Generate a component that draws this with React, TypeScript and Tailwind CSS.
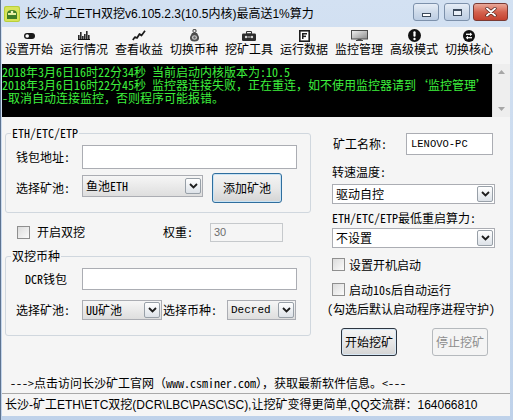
import React from "react";

const CJK = "font-['Noto_Sans_Mono_CJK_SC','Noto_Sans_CJK_SC',monospace]";
const SANS = "font-['Liberation_Sans','Noto_Sans_CJK_SC',sans-serif]";

function Chevron() {
  return (
    <svg width="9" height="6" viewBox="0 0 9 6">
      <path d="M1 1 L4.5 4.5 L8 1" fill="none" stroke="#1d1d1d" strokeWidth="1.8" />
    </svg>
  );
}

function ArrowBox() {
  return (
    <div className="w-[16px] h-[16px] shrink-0 border border-[#98a0a8] rounded-[2px] bg-gradient-to-b from-white to-[#dde2e8] flex items-center justify-center">
      <Chevron />
    </div>
  );
}

function Select({ w, h, text, gray, mono }: { w: string; h: string; text: string; gray?: boolean; mono?: boolean }) {
  return (
    <div
      className={`${w} ${h} shrink-0 border border-[#abadb3] flex items-center justify-between pl-[3px] pr-[1px] ${
        gray ? "bg-gradient-to-b from-[#f6f6f6] to-[#dedede]" : "bg-white"
      }`}
    >
      <span className={`${mono ? "font-['Liberation_Mono',monospace] text-[11px]" : "text-[12px]"} leading-[12px] text-black whitespace-nowrap`}>
        {text}
      </span>
      <ArrowBox />
    </div>
  );
}

function Checkbox() {
  return <div className="w-[13px] h-[13px] shrink-0 border border-[#8f8f8f] bg-gradient-to-br from-[#dcdcdc] to-[#fbfbfb]" />;
}

function Group({ title, className, children }: { title: string; className: string; children: React.ReactNode }) {
  return (
    <div className={`relative border border-[#d0d7de] rounded-[3px] ${className}`}>
      <span className="absolute left-[5px] top-[-7px] px-[1px] bg-[#f5f5f5] text-[12px] leading-[12px] whitespace-nowrap">{title}</span>
      {children}
    </div>
  );
}

const icons: Record<string, React.ReactNode> = {
  toggle: (
    <svg width="11" height="6" viewBox="0 0 11 6">
      <rect x="0" y="0" width="11" height="6" rx="3" fill="#1a1a1a" />
      <circle cx="3.2" cy="3" r="1.8" fill="#fff" />
    </svg>
  ),
  bars: (
    <svg width="12" height="9" viewBox="0 0 12 9">
      <rect x="0" y="4" width="1.6" height="5" fill="#2a2a2a" />
      <rect x="2" y="1" width="1.6" height="8" fill="#2a2a2a" />
      <rect x="4" y="5" width="1.6" height="4" fill="#2a2a2a" />
      <rect x="6" y="3" width="1.6" height="6" fill="#2a2a2a" />
      <rect x="8" y="0" width="1.6" height="9" fill="#2a2a2a" />
      <rect x="10" y="4" width="1.6" height="5" fill="#2a2a2a" />
      <rect x="0" y="8" width="12" height="1" fill="#111" />
    </svg>
  ),
  line: (
    <svg width="14" height="11" viewBox="0 0 14 11">
      <path d="M0.8 10 L3 7 L5 8 L7.5 4 L9.5 5.5 L13 0.8" fill="none" stroke="#1a1a1a" strokeWidth="1.7" strokeLinejoin="round" />
    </svg>
  ),
  bag: (
    <svg width="11" height="13" viewBox="0 0 11 13">
      <circle cx="5.5" cy="2" r="1.6" fill="none" stroke="#555" strokeWidth="1.1" />
      <path d="M3 4 L8 4 L10 8 Q10.5 12.5 5.5 12.5 Q0.5 12.5 1 8 Z" fill="#4d4d4d" />
      <ellipse cx="5.5" cy="8.5" rx="2.6" ry="2.2" fill="#c9c9c9" />
      <circle cx="5.5" cy="8.5" r="1.2" fill="#666" />
    </svg>
  ),
  toolbox: (
    <svg width="14" height="10" viewBox="0 0 14 10">
      <rect x="4.5" y="0.5" width="5" height="2.5" rx="0.8" fill="none" stroke="#333" strokeWidth="1.1" />
      <rect x="0" y="2.5" width="14" height="7.5" rx="1.2" fill="#2b2b2b" />
      <circle cx="4" cy="6" r="1.2" fill="#d8d8d8" />
      <circle cx="10" cy="6" r="1.2" fill="#d8d8d8" />
      <rect x="5.3" y="5.5" width="3.4" height="1" fill="#d8d8d8" />
    </svg>
  ),
  form: (
    <svg width="11" height="12" viewBox="0 0 11 12">
      <rect x="0.8" y="0.8" width="9.4" height="10.4" fill="#fff" stroke="#1f1f1f" strokeWidth="1.6" />
      <rect x="3" y="3" width="5" height="1.5" fill="#1f1f1f" />
      <rect x="3" y="5.6" width="4" height="1.5" fill="#1f1f1f" />
      <rect x="3" y="3" width="1.5" height="6" fill="#1f1f1f" />
    </svg>
  ),
  monitor: (
    <svg width="17" height="11" viewBox="0 0 17 11">
      <defs>
        <linearGradient id="scr" x1="0" y1="0" x2="1" y2="1">
          <stop offset="0" stopColor="#f2f2f2" />
          <stop offset="1" stopColor="#8a8a8a" />
        </linearGradient>
      </defs>
      <rect x="0.5" y="0.5" width="16" height="8.5" fill="url(#scr)" stroke="#4a4a4a" />
      <rect x="6.5" y="9" width="4" height="1" fill="#4a4a4a" />
      <rect x="5" y="10" width="7" height="1" fill="#4a4a4a" />
    </svg>
  ),
  excl: (
    <svg width="13" height="13" viewBox="0 0 13 13">
      <circle cx="6.5" cy="6.5" r="6.5" fill="#111" />
      <rect x="5.4" y="2.2" width="2.2" height="5.6" rx="1" fill="#fff" />
      <circle cx="6.5" cy="10" r="1.2" fill="#fff" />
    </svg>
  ),
  swap: (
    <svg width="12" height="12" viewBox="0 0 12 12">
      <circle cx="6" cy="6" r="6" fill="#111" />
      <path d="M3 4.3 L8 4.3" stroke="#fff" strokeWidth="1.3" />
      <path d="M7 2.4 L9.3 4.3 L7 6.2 Z" fill="#fff" />
      <path d="M4 7.7 L9 7.7" stroke="#fff" strokeWidth="1.3" />
      <path d="M5 5.8 L2.7 7.7 L5 9.6 Z" fill="#fff" />
    </svg>
  ),
};

const tools: [string, string][] = [
  ["toggle", "设置开始"],
  ["bars", "运行情况"],
  ["line", "查看收益"],
  ["bag", "切换币种"],
  ["toolbox", "挖矿工具"],
  ["form", "运行数据"],
  ["monitor", "监控管理"],
  ["excl", "高级模式"],
  ["swap", "切换核心"],
];

function CaptionButton({ kind }: { kind: "min" | "max" | "close" }) {
  if (kind === "close") {
    return (
      <div className="w-[35px] h-[18px] rounded-[3px] border border-[#7a3a33] bg-gradient-to-b from-[#e9a99a] via-[#d4624f] to-[#c4412f] flex items-center justify-center">
        <svg width="12" height="10" viewBox="0 0 12 10">
          <path d="M2 1.5 L10 8.5 M10 1.5 L2 8.5" stroke="#4a1d18" strokeWidth="3.2" strokeLinecap="round" />
          <path d="M2 1.5 L10 8.5 M10 1.5 L2 8.5" stroke="#fff" strokeWidth="1.9" strokeLinecap="round" />
        </svg>
      </div>
    );
  }
  return (
    <div className="w-[26px] h-[18px] rounded-[3px] border border-[#7d91ab] bg-gradient-to-b from-[#e7eef7] via-[#cfdbea] to-[#bccde3] flex items-center justify-center">
      {kind === "min" ? (
        <div className="w-[9px] h-[4px] mt-[6px] border border-[#3c4a5c] bg-white" />
      ) : (
        <div className="w-[9px] h-[7px] border border-[#3c4a5c] border-t-2 bg-[#e8eef6]" />
      )}
    </div>
  );
}

export default function App() {
  return (
    <div className={`w-[513px] h-[420px] flex flex-col bg-gradient-to-b from-[#d3e1f2] to-[#bfd2ea] border-l border-[#5d7390] text-black ${CJK}`}>
      {/* Title bar */}
      <div className="h-[27px] shrink-0 flex items-start">
        <div className="flex items-center h-[27px] pl-[3px]">
          <svg width="16" height="16" viewBox="0 0 16 16">
            <rect x="0" y="0" width="16" height="16" rx="2" fill="#b9cf3a" />
            <rect x="1" y="1" width="14" height="14" rx="1.5" fill="#d8e45a" />
            <path d="M3 13 L3 8 Q3 4 8 4 Q13 4 13 8 L13 13 Z" fill="#3f7d28" />
            <rect x="4" y="7" width="8" height="2" fill="#e8f0a0" />
            <circle cx="8" cy="6" r="1.3" fill="#f5f5c0" />
          </svg>
          <span className={`ml-[5px] text-[12px] leading-[12px] whitespace-nowrap ${SANS}`}>
            长沙-矿工ETH双挖v6.105.2.3(10.5内核)最高送1%算力
          </span>
        </div>
        <div className="ml-auto flex items-start pt-[3px] pr-[5px]">
          <CaptionButton kind="min" />
          <div className="ml-[5px]">
            <CaptionButton kind="max" />
          </div>
          <div className="ml-[3px]">
            <CaptionButton kind="close" />
          </div>
        </div>
      </div>

      {/* Client area */}
      <div className="flex-1 ml-[1px] mr-[3px] mb-[4px] bg-[#f5f5f5] flex flex-col">
        {/* Toolbar */}
        <div className="h-[36px] shrink-0 flex items-start pt-[1px] pl-[3px] gap-[7px]">
          {tools.map(([k, label]) => (
            <div key={label} className="w-[48px] flex flex-col items-center">
              <div className="h-[15px] flex items-center justify-center">{icons[k]}</div>
              <span className="text-[12px] leading-[12px] whitespace-nowrap font-['Noto_Sans_CJK_SC',sans-serif]">{label}</span>
            </div>
          ))}
        </div>

        {/* Console */}
        <div className="mt-[1px] h-[53px] shrink-0 flex">
          <div className="flex-1 bg-black text-[#3df03d] text-[12px] leading-[13px] pt-[1px]">
            <div className="whitespace-nowrap">2018年3月6日16时22分34秒 当前启动内核版本为:10.5</div>
            <div className="whitespace-nowrap">2018年3月6日16时22分45秒 监控器连接失败，正在重连，如不使用监控器请到‘监控管理’</div>
            <div className="whitespace-nowrap">-取消自动连接监控，否则程序可能报错。</div>
          </div>
          <div className="w-[18px] bg-[#eeeeee] border-l border-[#e2e2e2] flex flex-col items-center justify-between py-[6px]">
            <svg width="7" height="4" viewBox="0 0 7 4">
              <path d="M0 4 L3.5 0 L7 4 Z" fill="#a6a6a6" />
            </svg>
            <svg width="7" height="4" viewBox="0 0 7 4">
              <path d="M0 0 L3.5 4 L7 0 Z" fill="#a6a6a6" />
            </svg>
          </div>
        </div>

        {/* Main */}
        <div className="flex pt-[16px]">
          {/* Left column */}
          <div className="ml-[3px] w-[306px] flex flex-col">
            <Group title="ETH/ETC/ETP" className="h-[80px] pt-[11px] pl-[10px]">
              <div className="flex items-center h-[24px]">
                <span className="w-[66px] text-[12px] leading-[12px]">钱包地址:</span>
                <div className="w-[215px] h-[24px] bg-white border border-[#abadb3]" />
              </div>
              <div className="flex items-center h-[30px] mt-[4px]">
                <span className="w-[66px] text-[12px] leading-[12px]">选择矿池:</span>
                <div className="-mt-[4px]">
                  <Select w="w-[121px]" h="h-[22px]" text="鱼池ETH" gray />
                </div>
                <div className="ml-[9px] w-[70px] h-[30px] rounded-[3px] border border-[#2f6e9e] bg-gradient-to-b from-[#f4f4f4] via-[#e8e8e8] to-[#d4d4d4] shadow-[inset_0_0_0_1px_#c8e3f5] flex items-center justify-center text-[12px] leading-[12px]">
                  添加矿池
                </div>
              </div>
            </Group>

            <div className="mt-[10px] h-[18px] flex items-center">
              <div className="ml-[12px]">
                <Checkbox />
              </div>
              <span className="ml-[7px] w-[126px] text-[12px] leading-[12px]">开启双挖</span>
              <span className="w-[47px] text-[12px] leading-[12px]">权重:</span>
              <div className="w-[73px] h-[19px] border border-[#c6c9cc] bg-[#f5f5f5] flex items-center pl-[3px]">
                <span className={`text-[11px] leading-[11px] text-[#6d6d6d] ${SANS}`}>30</span>
              </div>
            </div>

            <Group title="双挖币种" className="mt-[15px] h-[80px] pt-[11px] pl-[10px]">
              <div className="flex items-center h-[22px]">
                <span className="w-[66px] pl-[9px] text-[12px] leading-[12px]">DCR钱包</span>
                <div className="w-[215px] h-[22px] bg-white border border-[#abadb3]" />
              </div>
              <div className="flex items-center h-[20px] mt-[10px]">
                <span className="w-[66px] text-[12px] leading-[12px]">选择矿池:</span>
                <Select w="w-[80px]" h="h-[20px]" text="UU矿池" gray />
                <span className="ml-[1px] w-[64px] text-[12px] leading-[12px]">选择币种:</span>
                <Select w="w-[69px]" h="h-[20px]" text="Decred" gray mono />
              </div>
            </Group>
          </div>

          {/* Right column */}
          <div className="ml-[16px] w-[170px] flex flex-col">
            <div className="flex items-center h-[22px]">
              <span className="pl-[6px] w-[79px] text-[12px] leading-[12px]">矿工名称:</span>
              <div className="w-[87px] h-[22px] bg-white border border-[#abadb3] flex items-center pl-[4px]">
                <span className="font-['Liberation_Mono',monospace] text-[10.5px] leading-[11px]">LENOVO-PC</span>
              </div>
            </div>
            <span className="mt-[11px] pl-[5px] text-[12px] leading-[12px]">转速温度:</span>
            <div className="mt-[6px] ml-[5px]">
              <Select w="w-[163px]" h="h-[20px]" text="驱动自控" />
            </div>
            <span className="mt-[8px] pl-[5px] text-[12px] leading-[12px] whitespace-nowrap">ETH/ETC/ETP最低重启算力:</span>
            <div className="mt-[4px] ml-[5px]">
              <Select w="w-[163px]" h="h-[20px]" text="不设置" />
            </div>
            <div className="mt-[10px] ml-[5px] flex items-center h-[13px]">
              <Checkbox />
              <span className="ml-[4px] text-[12px] leading-[12px]">设置开机启动</span>
            </div>
            <div className="mt-[12px] ml-[5px] flex items-center h-[13px]">
              <Checkbox />
              <span className="ml-[4px] text-[12px] leading-[12px]">启动10s后自动运行</span>
            </div>
            <span className="mt-[7px] text-[12px] leading-[12px] whitespace-nowrap">(勾选后默认启动程序进程守护)</span>
            <div className="mt-[13px] flex">
              <div className="ml-[14px] w-[56px] h-[28px] rounded-[3px] border border-[#2d3540] bg-gradient-to-b from-[#f4f4f4] via-[#e8e8e8] to-[#d4d4d4] shadow-[inset_0_0_0_1px_#d8e8f5] flex items-center justify-center text-[12px] leading-[12px]">
                开始挖矿
              </div>
              <div className="ml-[35px] w-[56px] h-[28px] rounded-[3px] border border-[#b5b9bd] bg-[#f4f4f4] flex items-center justify-center text-[12px] leading-[12px] text-[#8d8d8d]">
                停止挖矿
              </div>
            </div>
          </div>
        </div>

        <div className="mt-[21px] pl-[8px] text-[12px] leading-[12px] whitespace-nowrap">
          ---&gt;点击访问长沙矿工官网（www.csminer.com），获取最新软件信息。&lt;---
        </div>

        <div className="mt-auto h-[23px] border-t border-[#a9a9a9] flex items-center pl-[3px]">
          <span className={`text-[12px] leading-[12px] whitespace-nowrap ${SANS}`}>
            长沙-矿工ETH\ETC双挖(DCR\LBC\PASC\SC),让挖矿变得更简单,QQ交流群：164066810
          </span>
        </div>
      </div>
    </div>
  );
}
